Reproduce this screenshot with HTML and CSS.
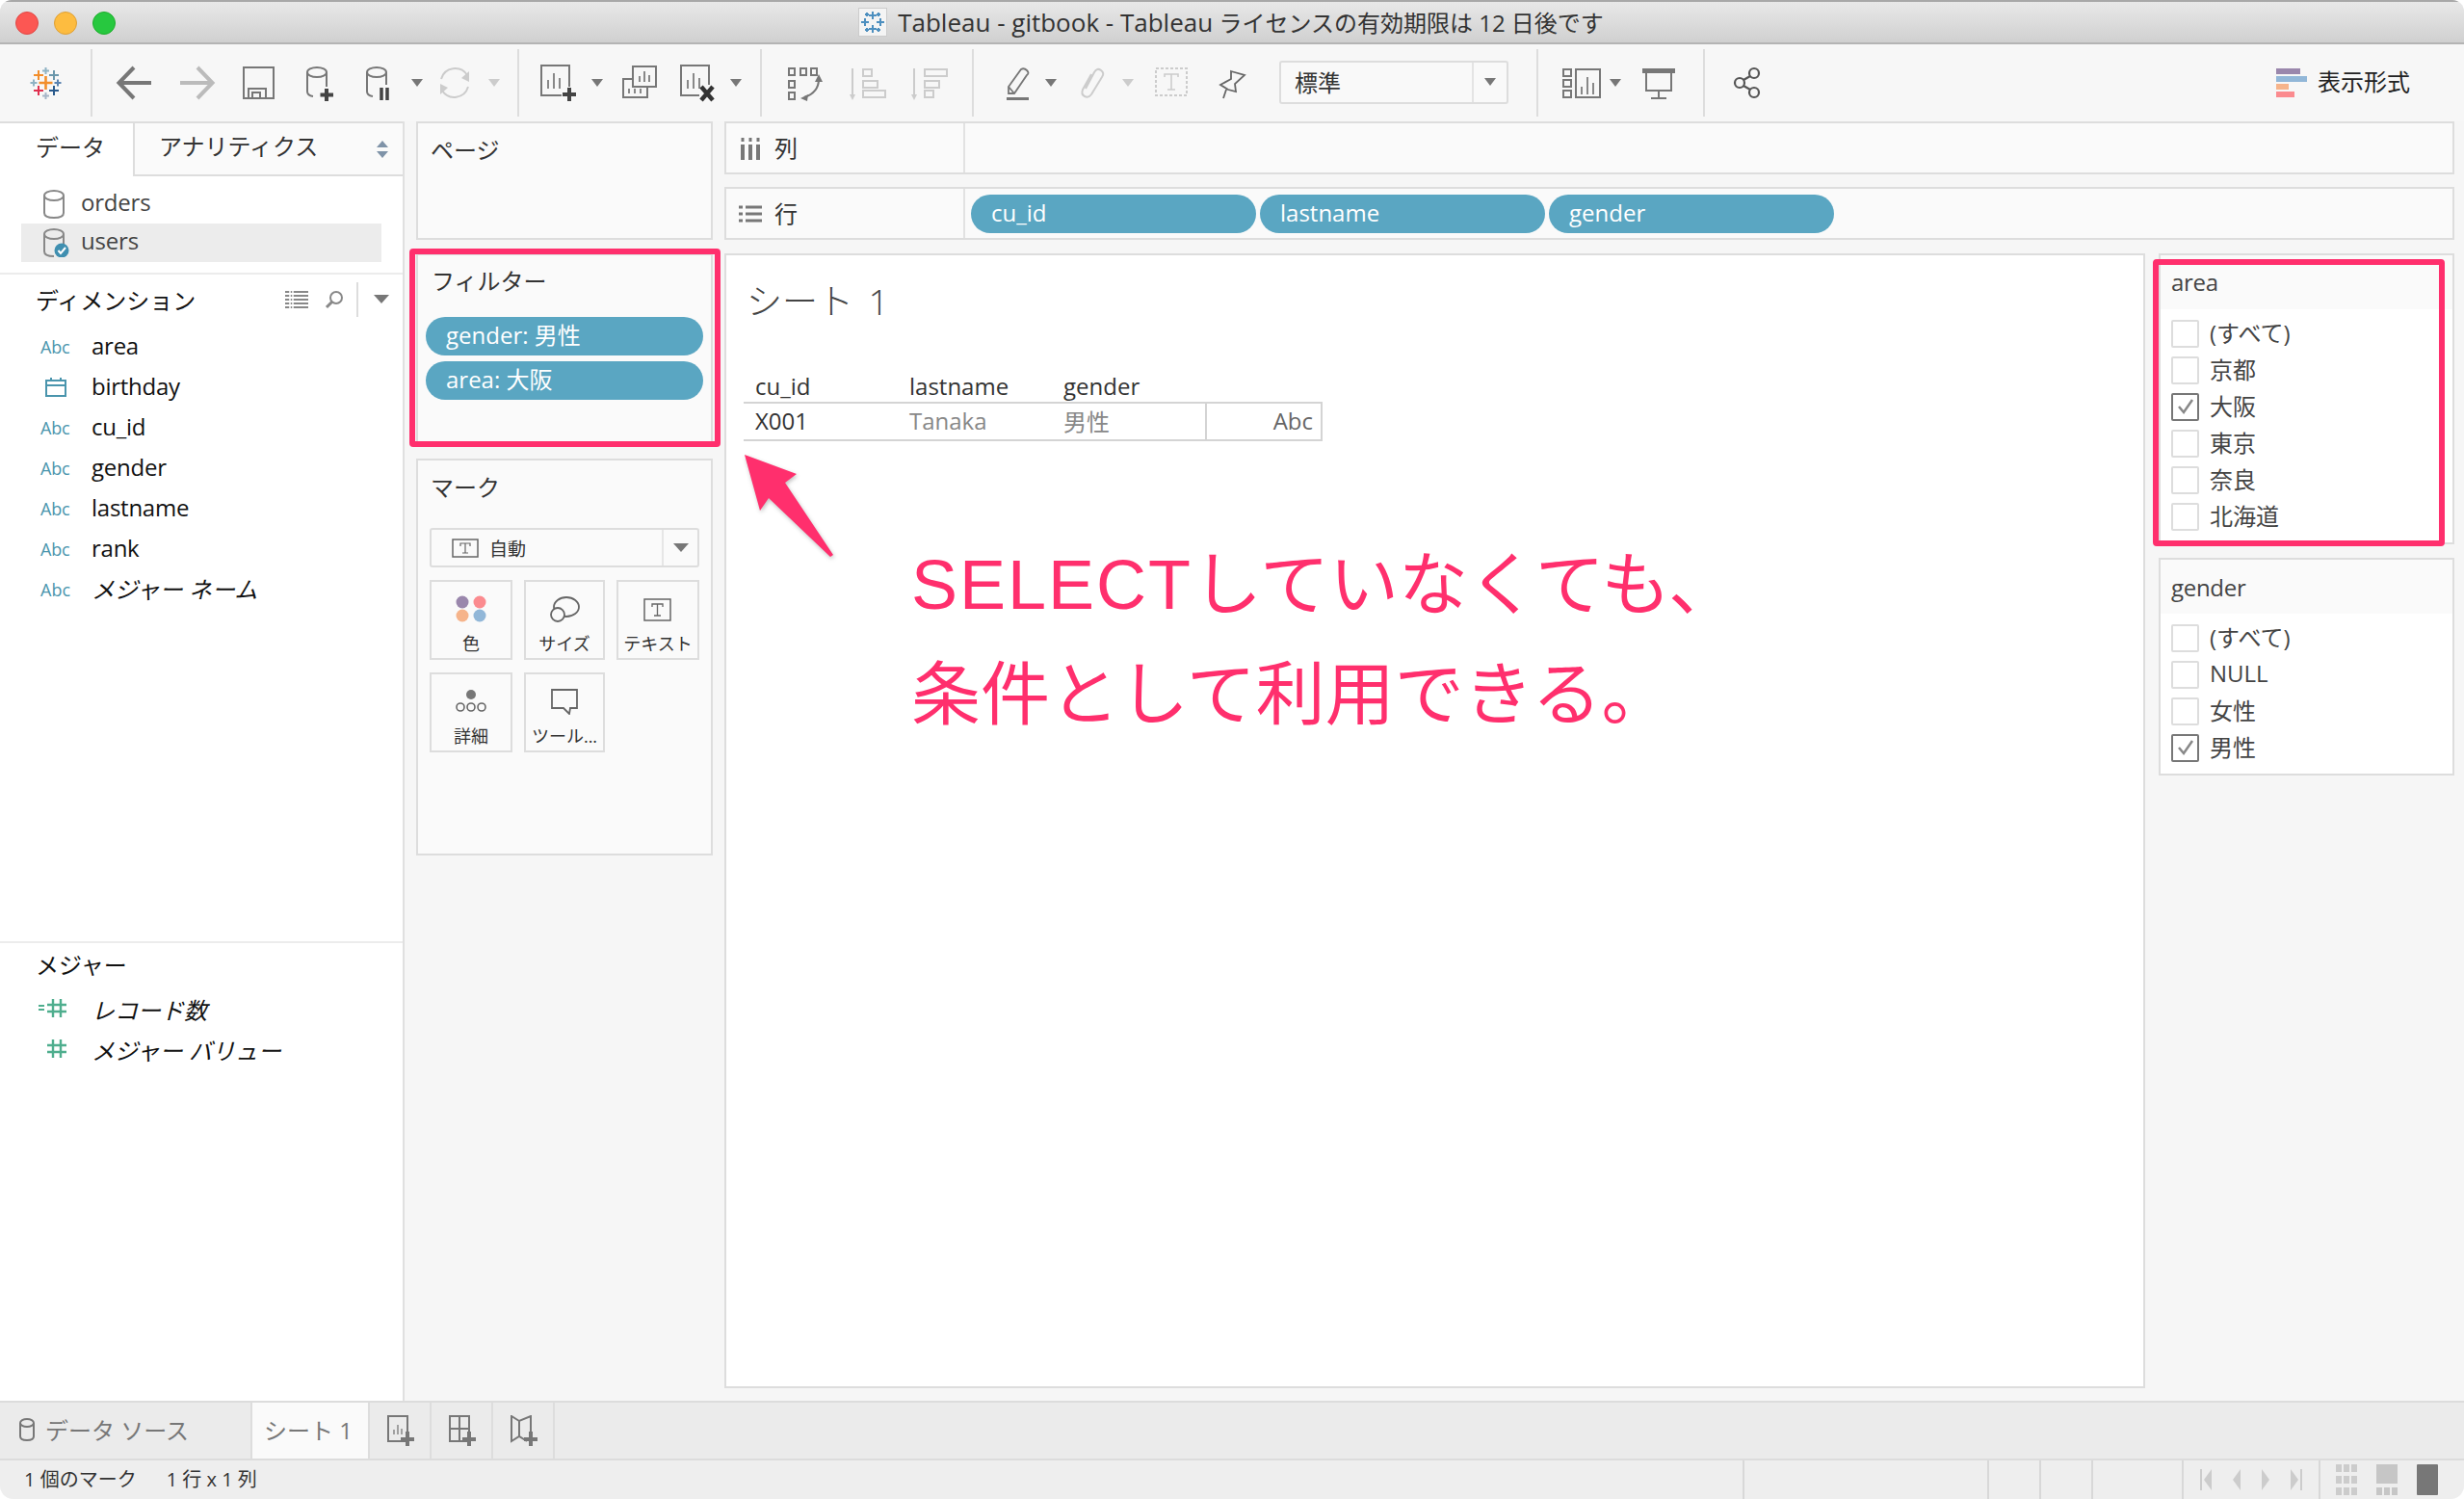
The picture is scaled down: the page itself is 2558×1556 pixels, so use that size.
FILE: index.html
```html
<!DOCTYPE html>
<html lang="ja">
<head>
<meta charset="utf-8">
<title>Tableau - gitbook</title>
<link rel="stylesheet" href="styles.css">
</head>
<body>
<div class="window">
  <header class="titlebar">
    <div class="lights"><span class="light red"></span><span class="light yellow"></span><span class="light green"></span></div>
    <div class="title">
      <svg class="doc" width="30" height="30" viewBox="0 0 30 30"><rect x="0.5" y="0.5" width="29" height="29" fill="#f4f4f4" stroke="#ccc"/><g stroke="#4d8fbf" stroke-width="2" fill="none"><path d="M15 4v8M11 8h8M15 18v8M11 22h8M7 11v8M3 15h8M23 11v8M19 15h8M9 5v4M7 7h4M21 5v4M19 7h4M9 21v4M7 23h4M21 21v4M19 23h4"/></g></svg>
      <span><span class="title-en">Tableau - gitbook - Tableau</span> ライセンスの有効期限は 12 日後です</span>
    </div>
  </header>

  <nav class="toolbar">
    <svg class="ti ml28" viewBox="0 0 40 40"><g fill="none" stroke-width="2"><path d="M19.5 13v14M12.500 20h14" stroke="#f28e2b" stroke-width="2.600"/><path d="M12 7v10M7 12h10" stroke="#f28e2b"/><path d="M28 7v10M23 12h10" stroke="#6b97ab"/><path d="M12 23v10M7 28h10" stroke="#e0304f"/><path d="M28 23v10M23 28h10" stroke="#2a5a8c"/><path d="M19.500 4v7M16 7.500h7" stroke="#8fb3c4"/><path d="M19.500 30v7M16 33.500h7" stroke="#a5b5c8"/><path d="M7 16.500v7M3.500 20h7" stroke="#8fb3c4"/><path d="M32 16.500v7M28.500 20h7" stroke="#5b83b0"/></g></svg>
    <i class="sep ml26"></i>
    <svg class="ti ml24" viewBox="0 0 40 40"><path d="M19 4 3.5 20 19 36M3.5 20H37" fill="none" stroke="#777" stroke-width="4"/></svg>
    <svg class="ti ml24" viewBox="0 0 40 40"><path d="M21 4 36.5 20 21 36M36.5 20H3" fill="none" stroke="#bbb" stroke-width="4"/></svg>
    <svg class="ti ml24" viewBox="0 0 40 40"><g fill="none" stroke="#777" stroke-width="2"><rect x="5" y="4" width="31" height="32"/><path d="M10 36V26H28V36M14 36V30H22V36"/></g></svg>
    <svg class="ti ml24" viewBox="0 0 40 40"><g fill="none" stroke="#777" stroke-width="2"><ellipse cx="17" cy="9" rx="10" ry="5"/><path d="M7 9V29Q7 33 13 34M27 9V24"/></g><path d="M27 26V39M20.500 32.500H34" stroke="#444" stroke-width="4"/></svg>
    <svg class="ti ml23" viewBox="0 0 40 40"><g fill="none" stroke="#777" stroke-width="2"><ellipse cx="16" cy="9" rx="10" ry="5"/><path d="M6 9V29Q6 33 12 34M26 9V22"/></g><path d="M21 25V38M27 25V38" stroke="#444" stroke-width="3.500"/></svg>
    <i class="caret ml12"></i>
    <svg class="ti ml13" viewBox="0 0 40 40"><g fill="none" stroke="#ccc" stroke-width="2"><path d="M6 16A15 15 0 0 1 33 12M34 24A15 15 0 0 1 7 28"/></g><path d="M35 8V19L27 15ZM5 32V21L13 25Z" fill="#ccc"/></svg>
    <i class="caret light-caret ml15"></i>
    <i class="sep ml18"></i>
    <svg class="ti ml21" viewBox="0 0 40 40"><g fill="none" stroke="#777" stroke-width="2"><path d="M23 33H2V2H31V24"/><path d="M9 26V17M15 26V10M21 26V15" stroke="#888"/></g><path d="M31 25V39M24 32H38" stroke="#444" stroke-width="4"/></svg>
    <i class="caret ml14"></i>
    <svg class="ti ml18" viewBox="0 0 40 40"><g fill="none" stroke="#777" stroke-width="2"><path d="M13 3H37V24H13ZM13 16H3V35H28V24"/><path d="M20 19V13M25 19V8M30 19V12M9 31V26M15 31V26M21 31V26" stroke="#888"/></g></svg>
    <svg class="ti ml20" viewBox="0 0 40 40"><g fill="none" stroke="#777" stroke-width="2"><path d="M22 33H3V2H32V22"/><path d="M10 26V17M16 26V10M22 26V15" stroke="#888"/></g><path d="M24 24 36 38M36 24 24 38" stroke="#333" stroke-width="4.500"/></svg>
    <i class="caret ml14"></i>
    <i class="sep ml19"></i>
    <svg class="ti ml25" viewBox="0 0 40 40"><g fill="none" stroke="#777" stroke-width="2"><rect x="3" y="5" width="6" height="7"/><rect x="15" y="5" width="6" height="7"/><rect x="26" y="5" width="6" height="7"/><rect x="3" y="18" width="6" height="7"/><rect x="3" y="30" width="6" height="7"/><path d="M34 16Q34 30 19 35"/></g><path d="M34 11 38 19H30ZM15 36 23 32 22 39Z" fill="#777"/></svg>
    <svg class="ti ml24" viewBox="0 0 40 40"><g fill="none" stroke="#ccc" stroke-width="2"><path d="M5 5V33"/><rect x="16" y="6" width="9" height="7"/><rect x="16" y="18" width="15" height="7"/><rect x="16" y="28" width="23" height="7"/></g><path d="M2 32H8L5 38Z" fill="#ccc"/></svg>
    <svg class="ti ml24" viewBox="0 0 40 40"><g fill="none" stroke="#ccc" stroke-width="2"><path d="M5 5V33"/><rect x="16" y="6" width="23" height="7"/><rect x="16" y="18" width="15" height="7"/><rect x="16" y="28" width="9" height="7"/></g><path d="M2 32H8L5 38Z" fill="#ccc"/></svg>
    <i class="sep ml25"></i>
    <svg class="ti ml25" viewBox="0 0 40 40"><g fill="none" stroke="#777" stroke-width="1.800"><path d="M11 24 24 6Q27 4 30 7T30 12L17 31H11Z"/><path d="M11 24 17 31"/></g><path d="M9 35H32V38H9Z" fill="#777"/></svg>
    <i class="caret ml9"></i>
    <svg class="ti ml15" viewBox="0 0 40 40"><path d="M15 26 24 9Q27 4 31 7T32 14L21 32Q18 36 14 34T12 27L21 11" fill="none" stroke="#ccc" stroke-width="2"/></svg>
    <i class="caret light-caret ml13"></i>
    <svg class="ti ml19" viewBox="0 0 40 40"><rect x="4" y="5" width="32" height="28" fill="none" stroke="#ccc" stroke-width="2" stroke-dasharray="3 2"/><path d="M13 14V11H27V14M20 11V27M16 27H24" fill="none" stroke="#ccc" stroke-width="1.600"/></svg>
    <svg class="ti ml23" viewBox="0 0 40 40"><path d="M19 8 33 12 23 21 24 29 16 27 8 22 19 16ZM14 27 11 36" fill="none" stroke="#666" stroke-width="1.800"/></svg>
    <div class="tb-select ml29"><span class="tb-select-label">標準</span><span class="tb-select-btn"><i class="caret"></i></span></div>
    <i class="sep ml29"></i>
    <svg class="ti ml25" viewBox="0 0 40 40"><g fill="none" stroke="#777" stroke-width="2"><rect x="1" y="6" width="8" height="7"/><rect x="1" y="17" width="8" height="7"/><rect x="1" y="28" width="8" height="7"/><rect x="14" y="6" width="25" height="29"/><path d="M20 32V24M26 32V14M32 32V20" stroke="#888"/></g></svg>
    <i class="caret ml9"></i>
    <svg class="ti ml19" viewBox="0 0 40 40"><g fill="none" stroke="#777" stroke-width="2"><path d="M7 9V28H33V9M20 28V36M12 36H28"/></g><path d="M3 5H37V10H3Z" fill="#777"/></svg>
    <i class="sep ml26"></i>
    <svg class="ti ml24" viewBox="0 0 40 40"><g fill="none" stroke="#555" stroke-width="2.200"><circle cx="27" cy="10" r="5"/><circle cx="12" cy="20" r="5"/><circle cx="27" cy="30" r="5"/><path d="M16 17 23 13M16 23 23 27"/></g></svg>
    <div class="showme"><span class="showme-bars"><i class="b1"></i><i class="b2"></i><i class="b3"></i><i class="b4"></i></span><span class="showme-label">表示形式</span></div>
  </nav>

  <main class="main">
    <aside class="data-pane">
      <div class="pane-tabs">
        <div class="pane-tab active">データ</div>
        <div class="pane-tab">アナリティクス<span class="updown"></span></div>
      </div>
      <ul class="sources">
        <li class="source"><svg class="cyl" width="22" height="30" viewBox="0 0 22 30"><g fill="none" stroke="#888" stroke-width="2"><ellipse cx="11" cy="6" rx="10" ry="5"/><path d="M1 6V24Q1 29 11 29T21 24V6"/></g></svg>orders</li>
        <li class="source selected"><svg class="cyl" width="28" height="30" viewBox="0 0 28 30"><g fill="none" stroke="#888" stroke-width="2"><ellipse cx="11" cy="6" rx="10" ry="5"/><path d="M1 6V24Q1 29 11 29M21 6V16"/></g><circle cx="19" cy="23" r="7.500" fill="#3f8fb0"/><path d="M15.500 23 18 26 23 20" fill="none" stroke="#fff" stroke-width="2"/></svg>users</li>
      </ul>
      <section class="dims">
        <div class="sec-head">ディメンション
          <span class="sec-tools">
            <svg width="24" height="18" viewBox="0 0 24 18"><path d="M0 1H24M0 5H24M0 9H24M0 13H24M0 17H24" stroke="#888" stroke-width="2"/><path d="M5 0V18M8 0V18" stroke="#fff" stroke-width="1.500"/></svg>
            <svg class="mag" width="20" height="20" viewBox="0 0 20 20"><circle cx="12" cy="8" r="6" fill="none" stroke="#888" stroke-width="2"/><path d="M8 12 2 18" stroke="#888" stroke-width="3"/></svg>
            <i class="tool-sep"></i>
            <i class="caret big"></i>
          </span>
        </div>
        <ul class="fields">
          <li class="field"><span class="abc">Abc</span>area</li>
          <li class="field"><span class="abc"><svg width="22" height="20" viewBox="0 0 22 20"><g fill="none" stroke="#4a95ad" stroke-width="2"><rect x="1" y="3" width="20" height="16"/><path d="M1 8H21M6 0V3M16 0V3"/></g></svg></span>birthday</li>
          <li class="field"><span class="abc">Abc</span>cu_id</li>
          <li class="field"><span class="abc">Abc</span>gender</li>
          <li class="field"><span class="abc">Abc</span>lastname</li>
          <li class="field"><span class="abc">Abc</span>rank</li>
          <li class="field italic"><span class="abc upright">Abc</span>メジャー ネーム</li>
        </ul>
      </section>
      <section class="measures">
        <div class="sec-head">メジャー</div>
        <ul class="fields">
          <li class="field italic"><span class="abc"><svg width="30" height="20" viewBox="0 0 30 20"><path d="M0 7H6M0 11H6" stroke="#4fae8e" stroke-width="2"/><path d="M9 6H29M9 13H29M15 0V19M23 0V19" stroke="#4fae8e" stroke-width="2.400" fill="none"/></svg></span>レコード数</li>
          <li class="field italic"><span class="abc"><svg width="30" height="20" viewBox="0 0 30 20"><path d="M9 6H29M9 13H29M15 0V19M23 0V19" stroke="#4fae8e" stroke-width="2.400" fill="none"/></svg></span>メジャー バリュー</li>
        </ul>
      </section>
    </aside>

    <div class="cards">
      <section class="card pages"><h3 class="card-title">ページ</h3></section>
      <section class="card filters">
        <h3 class="card-title">フィルター</h3>
        <div class="filter-pill">gender: 男性</div>
        <div class="filter-pill">area: 大阪</div>
      </section>
      <section class="card marks">
        <h3 class="card-title">マーク</h3>
        <div class="mark-select">
          <svg width="28" height="20" viewBox="0 0 28 20"><rect x="1" y="1" width="26" height="18" fill="none" stroke="#666" stroke-width="1.500"/><path d="M9 8V5H19V8M14 5V15M11 15H17" fill="none" stroke="#666" stroke-width="1.200"/></svg>
          <span>自動</span>
          <span class="mark-select-btn"><i class="caret big"></i></span>
        </div>
        <div class="mark-grid">
          <div class="mark-btn"><svg width="32" height="28" viewBox="0 0 32 28"><circle cx="7" cy="7" r="6.500" fill="#9a87ac"/><circle cx="25" cy="7" r="6.500" fill="#fb8b8f"/><circle cx="7" cy="21" r="6.500" fill="#f6b48b"/><circle cx="25" cy="21" r="6.500" fill="#92b7d8"/></svg><span>色</span></div>
          <div class="mark-btn"><svg width="32" height="28" viewBox="0 0 32 28"><g fill="none" stroke="#666" stroke-width="1.800"><ellipse cx="18" cy="12" rx="13" ry="10"/><circle cx="9" cy="20" r="7" fill="#fafafa"/></g></svg><span>サイズ</span></div>
          <div class="mark-btn"><svg width="30" height="26" viewBox="0 0 30 26"><rect x="1" y="2" width="27" height="22" fill="none" stroke="#666" stroke-width="1.500"/><path d="M9 10V7H20V10M14.500 7V19M11 19H18" fill="none" stroke="#666" stroke-width="1.300"/></svg><span>テキスト</span></div>
          <div class="mark-btn"><svg width="32" height="28" viewBox="0 0 32 28"><circle cx="16" cy="7" r="5" fill="#777"/><g fill="none" stroke="#666" stroke-width="1.600"><circle cx="5" cy="20" r="4"/><circle cx="16" cy="20" r="4"/><circle cx="27" cy="20" r="4"/></g></svg><span>詳細</span></div>
          <div class="mark-btn"><svg width="30" height="28" viewBox="0 0 30 28"><path d="M2 2H28V21H21L20 27 14 21H2Z" fill="none" stroke="#666" stroke-width="1.800"/></svg><span>ツール...</span></div>
        </div>
      </section>
    </div>

    <div class="workspace">
      <div class="shelf"><div class="shelf-label"><svg width="24" height="24" viewBox="0 0 24 24"><path d="M4 8V24M12 8V24M20 8V24" stroke="#777" stroke-width="4"/><path d="M4 1V5M12 1V5M20 1V5" stroke="#777" stroke-width="3"/></svg><span class="shelf-name">列</span></div><div class="shelf-body"></div></div>
      <div class="shelf"><div class="shelf-label"><svg width="24" height="20" viewBox="0 0 24 20"><path d="M0 3H4M0 10H4M0 17H4M7 3H24M7 10H24M7 17H24" stroke="#777" stroke-width="3"/></svg><span class="shelf-name">行</span></div>
        <div class="shelf-body"><div class="pill">cu_id</div><div class="pill">lastname</div><div class="pill">gender</div></div>
      </div>
      <div class="work-row">
        <section class="viz">
          <h1 class="viz-title">シート 1</h1>
          <table class="crosstab">
            <thead><tr><th>cu_id</th><th>lastname</th><th>gender</th><th></th></tr></thead>
            <tbody><tr><td class="key">X001</td><td>Tanaka</td><td>男性</td><td class="abc-cell">Abc</td></tr></tbody>
          </table>
        </section>
        <aside class="legends">
          <section class="legend area-legend">
            <h4 class="legend-title">area</h4>
            <ul class="checks">
              <li><i class="box"></i>(すべて)</li>
              <li><i class="box"></i>京都</li>
              <li><i class="box on"><svg width="22" height="22" viewBox="0 0 22 22"><path d="M4 11 9 17 18 4" fill="none" stroke="#888" stroke-width="2.500"/></svg></i>大阪</li>
              <li><i class="box"></i>東京</li>
              <li><i class="box"></i>奈良</li>
              <li><i class="box"></i>北海道</li>
            </ul>
          </section>
          <section class="legend">
            <h4 class="legend-title">gender</h4>
            <ul class="checks">
              <li><i class="box"></i>(すべて)</li>
              <li><i class="box"></i>NULL</li>
              <li><i class="box"></i>女性</li>
              <li><i class="box on"><svg width="22" height="22" viewBox="0 0 22 22"><path d="M4 11 9 17 18 4" fill="none" stroke="#888" stroke-width="2.500"/></svg></i>男性</li>
            </ul>
          </section>
        </aside>
      </div>
    </div>
  </main>

  <div class="tabbar">
    <div class="tab source-tab"><svg width="16" height="24" viewBox="0 0 16 24"><g fill="none" stroke="#777" stroke-width="2"><ellipse cx="8" cy="5" rx="7" ry="4"/><path d="M1 5V19Q1 23 8 23T15 19V5"/></g></svg>データ ソース</div>
    <div class="tab sheet-tab">シート 1</div>
    <div class="tab add-tab"><svg width="32" height="32" viewBox="0 0 32 32"><path d="M20 27H2V1H22V18" fill="none" stroke="#777" stroke-width="2"/><path d="M8 20V15M12 20V10M16 20V14" stroke="#888" stroke-width="1.500"/><path d="M22 17V32M15 25H29" stroke="#777" stroke-width="4"/></svg></div>
    <div class="tab add-tab"><svg width="32" height="32" viewBox="0 0 32 32"><path d="M20 27H2V1H22V18M2 14H22M12 1V27" fill="none" stroke="#777" stroke-width="2"/><path d="M22 17V32M15 25H29" stroke="#777" stroke-width="4"/></svg></div>
    <div class="tab add-tab"><svg width="32" height="32" viewBox="0 0 32 32"><path d="M18 27 10 22 2 27V1L10 6 22 1V18M10 6V22" fill="none" stroke="#777" stroke-width="2"/><path d="M22 17V32M15 25H29" stroke="#777" stroke-width="4"/></svg></div>
  </div>

  <footer class="statusbar">
    <span class="status-a">1 個のマーク</span><span class="status-b">1 行 x 1 列</span>
    <div class="status-cells">
      <i class="scell w254"></i><i class="scell w54"></i><i class="scell w54"></i><i class="scell w94"></i>
      <div class="scell pager">
        <svg width="12" height="22" viewBox="0 0 12 22"><path d="M1 0V22" stroke="#ccc" stroke-width="2"/><path d="M12 0V22L4 11Z" fill="#ccc"/></svg>
        <svg width="8" height="22" viewBox="0 0 8 22"><path d="M8 0V22L0 11Z" fill="#ccc"/></svg>
        <svg width="8" height="22" viewBox="0 0 8 22"><path d="M0 0V22L8 11Z" fill="#ccc"/></svg>
        <svg width="12" height="22" viewBox="0 0 12 22"><path d="M11 0V22" stroke="#ccc" stroke-width="2"/><path d="M0 0V22L8 11Z" fill="#ccc"/></svg>
      </div>
      <div class="views">
        <svg width="22" height="32" viewBox="0 0 22 32"><path d="M0 0H6V8H0ZM8 0H14V8H8ZM16 0H22V8H16ZM0 12H6V20H0ZM8 12H14V20H8ZM16 12H22V20H16ZM0 24H6V32H0ZM8 24H14V32H8ZM16 24H22V32H16Z" fill="#ccc"/></svg>
        <svg width="22" height="32" viewBox="0 0 22 32"><path d="M0 0H22V20H0ZM0 24H6V32H0ZM8 24H14V32H8ZM16 24H22V32H16Z" fill="#c6c6c6"/></svg>
        <svg width="22" height="32" viewBox="0 0 22 32"><rect width="22" height="32" rx="1" fill="#777"/></svg>
      </div>
    </div>
  </footer>

  <div class="hl hl-filter"></div>
  <div class="hl hl-area"></div>
  <svg class="arrow" width="100" height="110" viewBox="0 0 100 110"><path d="M2 2 56 22 44 31 94 106 91 108 27 47 18 60Z" fill="#ff2f6d"/></svg>
  <p class="note"><span class="note-en">SELECT</span>していなくても、<br>条件として利用できる。</p>
</div>
</body>
</html>
```

FILE: styles.css
```css
* { box-sizing: border-box; }
html, body { margin: 0; padding: 0; background: #fff; }
body { width: 2558px; height: 1556px; overflow: hidden; font-family: "Open Sans", "Noto Sans CJK JP", sans-serif; color: #333; font-size: 24px; }
ul { list-style: none; margin: 0; padding: 0; }
h1, h3, h4, p { margin: 0; font-weight: 400; }
i { font-style: normal; display: block; }

.window { position: relative; width: 2558px; height: 1556px; display: flex; flex-direction: column; overflow: hidden; border-radius: 12px 12px 14px 14px; background: #f6f6f6; }

.titlebar { position: relative; height: 46px; flex: none; background: linear-gradient(#e8e8e8, #d0d0d0); border-top: 2px solid #a8a8a8; border-bottom: 2px solid #b4b4b4; display: flex; align-items: center; justify-content: center; }
.lights { position: absolute; left: 16px; top: 10px; display: flex; gap: 16px; }
.light { width: 24px; height: 24px; border-radius: 50%; }
.red { background: #fc5753; border: 1px solid #df4744; }
.yellow { background: #fdbc40; border: 1px solid #de9f34; }
.green { background: #27c83f; border: 1px solid #1dad2b; }
.title { display: flex; align-items: center; gap: 11px; font-size: 24px; color: #333; margin-left: -2px; }
.title-en { font-size: 26px; }

.toolbar { height: 80px; flex: none; display: flex; align-items: center; background: #f7f7f7; }
.ti { width: 40px; height: 40px; flex: none; }
.sep { width: 2px; height: 70px; background: #ddd; flex: none; }
.caret { width: 0; height: 0; border-left: 6px solid transparent; border-right: 6px solid transparent; border-top: 8px solid #777; flex: none; }
.caret.big { border-left-width: 8px; border-right-width: 8px; border-top-width: 9px; }
.light-caret { border-top-color: #ccc; }
.ml9 { margin-left: 9px; } .ml12 { margin-left: 12px; } .ml13 { margin-left: 13px; } .ml14 { margin-left: 14px; } .ml15 { margin-left: 15px; } .ml18 { margin-left: 18px; } .ml19 { margin-left: 19px; } .ml20 { margin-left: 20px; } .ml21 { margin-left: 21px; } .ml23 { margin-left: 23px; } .ml24 { margin-left: 24px; } .ml25 { margin-left: 25px; } .ml26 { margin-left: 26px; } .ml28 { margin-left: 28px; } .ml29 { margin-left: 29px; }
.tb-select { width: 238px; height: 45px; flex: none; border: 2px solid #ddd; border-radius: 3px; display: flex; align-items: center; background: #f9f9f9; font-size: 24px; margin-top: -2px; }
.tb-select-label { flex: 1; padding-left: 14px; padding-bottom: 2px; }
.tb-select-btn { width: 36px; height: 100%; border-left: 2px solid #e4e4e4; display: flex; align-items: center; justify-content: center; }
.showme { margin-left: auto; padding-right: 56px; display: flex; align-items: center; gap: 11px; color: #222; }
.showme-label { padding-bottom: 5px; }
.showme-bars { display: flex; flex-direction: column; gap: 2px; width: 32px; }
.showme-bars i { height: 6px; }
.b1 { width: 25px; background: #9a87ac; } .b2 { width: 32px; background: #92b7d8; } .b3 { width: 13px; background: #f6b48b; } .b4 { width: 19px; background: #fb8b8f; }

.main { flex: 1; min-height: 0; display: flex; }

.data-pane { width: 420px; flex: none; background: #fff; border-right: 2px solid #e0e0e0; display: flex; flex-direction: column; color: #111; }
.pane-tabs { display: flex; height: 57px; flex: none; border-top: 2px solid #ddd; }
.pane-tab { display: flex; align-items: center; padding-bottom: 8px; color: #333; }
.pane-tab.active { width: 138px; padding-left: 37px; background: #fff; }
.pane-tab:not(.active) { flex: 1; padding-left: 25px; background: #fafafa; border-left: 2px solid #ddd; border-bottom: 2px solid #ddd; position: relative; }
.updown { position: absolute; right: 15px; top: 18px; width: 12px; height: 18px; }
.updown::before, .updown::after { content: ""; position: absolute; left: 0; border-left: 6px solid transparent; border-right: 6px solid transparent; }
.updown::before { top: 0; border-bottom: 7px solid #7f93a8; }
.updown::after { bottom: 0; border-top: 7px solid #7f93a8; }

.sources { height: 102px; flex: none; padding: 9px 22px 0; border-bottom: 2px solid #ececec; color: #444; letter-spacing: -0.2px; }
.source { height: 40px; display: flex; align-items: center; padding-left: 23px; padding-bottom: 5px; gap: 17px; }
.source .cyl { flex: none; margin-top: 5px; }
.source.selected { background: #ececec; gap: 11px; }

.dims { height: 694px; flex: none; border-bottom: 2px solid #ececec; }
.sec-head { height: 54px; display: flex; align-items: center; padding-left: 37px; color: #111; }
.dims .sec-head { padding-bottom: 3px; }
.sec-tools { margin-left: auto; display: flex; align-items: center; padding-right: 14px; }
.mag { margin-left: 17px; }
.tool-sep { width: 2px; height: 36px; background: #ddd; margin-left: 13px; margin-right: 16px; }
.field { height: 42px; display: flex; align-items: center; }
.dims .field { padding-bottom: 4px; letter-spacing: -0.25px; }
.dims .abc { margin-top: 4px; }
.field.italic { font-style: italic; letter-spacing: 0; }
.abc { width: 95px; padding-left: 42px; flex: none; font-size: 18px; color: #4a95ad; font-style: normal; display: flex; align-items: center; }
.field svg { margin-left: 5px; flex: none; }
.measures .field svg { margin-left: -2px; }
.measures .sec-head { height: 42px; margin-bottom: 5px; }

.cards { width: 308px; flex: none; margin-left: 12px; display: flex; flex-direction: column; }
.card { background: #fafafa; border: 2px solid #ddd; padding: 10px 0 0 13px; }
.card-title { font-size: 24px; line-height: 36px; }
.pages { height: 123px; }
.filters { height: 199px; margin-top: 14px; padding: 11px 8px 0; }
.filters .card-title { padding-left: 6px; margin-bottom: 19px; margin-top: -2px; }
.filter-pill { height: 40px; width: 288px; margin-bottom: 6px; border-radius: 20px; background: #5aa6c2; color: #fff; padding-left: 21px; line-height: 37px; }
.marks { height: 412px; margin-top: 14px; padding: 11px 0 0 12px; }
.marks .card-title { padding-left: 1px; margin-bottom: 24px; margin-top: -1px; }
.mark-select { width: 280px; height: 41px; border: 2px solid #ddd; border-radius: 3px; display: flex; align-items: center; padding-left: 21px; gap: 11px; font-size: 19px; }
.mark-select-btn { margin-left: auto; width: 37px; height: 100%; border-left: 2px solid #e6e6e6; display: flex; align-items: center; justify-content: center; }
.mark-grid { display: grid; grid-template-columns: 86px 84px 86px; column-gap: 12px; row-gap: 13px; margin-top: 13px; }
.mark-btn { height: 83px; border: 2px solid #ddd; display: flex; flex-direction: column; align-items: center; justify-content: flex-end; font-size: 18px; padding-bottom: 3px; gap: 8px; white-space: nowrap; }

.workspace { flex: 1; min-width: 0; margin-left: 12px; margin-right: 10px; display: flex; flex-direction: column; }
.shelf { height: 55px; flex: none; margin-bottom: 13px; border: 2px solid #ddd; background: #fafafa; display: flex; }
.shelf-label { width: 248px; flex: none; border-right: 2px solid #e2e2e2; display: flex; align-items: center; padding-left: 13px; gap: 13px; }
.shelf-name { padding-bottom: 3px; }
.shelf-body { flex: 1; display: flex; align-items: center; padding-left: 6px; gap: 4px; }
.pill { width: 296px; height: 40px; border-radius: 20px; background: #5aa6c2; color: #fff; padding-left: 21px; line-height: 38px; }
.work-row { display: flex; margin-top: 1px; gap: 14px; }
.viz { width: 1475px; height: 1178px; flex: none; background: #fff; border: 2px solid #ddd; padding: 23px 0 0 18px; }
.viz-title { font-size: 37px; line-height: 50px; color: #444; padding-left: 3px; font-weight: 300; word-spacing: 6px; }
.crosstab { border-collapse: collapse; margin-top: 38px; font-size: 24px; width: 600px; table-layout: fixed; }
.crosstab th { font-weight: 500; text-align: left; height: 40px; padding: 8px 0 0 12px; color: #333; width: 160px; }
.crosstab th:last-child { width: 120px; }
.crosstab td { height: 39px; padding: 0 0 2px 12px; border-top: 2px solid #d4d4d4; border-bottom: 2px solid #d4d4d4; color: #888; }
.crosstab td.key { color: #333; }
.crosstab td.abc-cell { text-align: right; padding-right: 8px; border-left: 2px solid #d4d4d4; border-right: 2px solid #d4d4d4; color: #666; }

.legends { width: 307px; flex: none; display: flex; flex-direction: column; gap: 14px; }
.legend { background: #fff; border: 2px solid #ddd; padding-bottom: 8px; }
.legend-title { height: 56px; background: #fafafa; padding-left: 11px; font-size: 24px; line-height: 58px; color: #444; letter-spacing: -0.3px; }
.area-legend { height: 302px; }
.area-legend .legend-title { line-height: 56px; }
.checks { padding: 6px 0 0 11px; }
.checks li { height: 38px; display: flex; align-items: center; gap: 11px; color: #444; padding-bottom: 3px; }
.box { width: 29px; height: 29px; border: 2px solid #ddd; border-radius: 2px; background: #fff; display: flex; align-items: center; justify-content: center; flex: none; margin-top: 3px; }
.box.on { border-color: #777; }

.tabbar { height: 62px; flex: none; background: #ebebeb; border-top: 2px solid #dcdcdc; border-bottom: 2px solid #dcdcdc; display: flex; color: #777; }
.tab { height: 58px; display: flex; align-items: center; border-right: 2px solid #ddd; }
.source-tab { width: 262px; padding-left: 20px; gap: 11px; padding-bottom: 3px; }
.sheet-tab { width: 122px; padding-left: 12px; padding-bottom: 3px; background: #fafafa; }
.add-tab { width: 64px; justify-content: center; padding-left: 3px; }

.statusbar { height: 40px; flex: none; background: #eee; display: flex; align-items: stretch; font-size: 20px; color: #333; line-height: 40px; position: relative; }
.status-a { margin-left: 25px; }
.status-b { margin-left: 31px; }
.status-cells { margin-left: auto; display: flex; align-items: stretch; }
.scell { border-left: 2px solid #d8d8d8; }
.w254 { width: 254px; } .w54 { width: 54px; } .w94 { width: 94px; }
.pager { width: 142px; display: flex; align-items: center; justify-content: center; gap: 22px; }
.views { width: 151px; border-left: 2px solid #d8d8d8; display: flex; align-items: center; gap: 20px; padding-left: 16px; }

.hl { position: absolute; border: 6px solid #ff2f6d; border-radius: 4px; pointer-events: none; }
.hl-filter { left: 425px; top: 258px; width: 323px; height: 206px; }
.hl-area { left: 2235px; top: 269px; width: 303px; height: 298px; }
.arrow { position: absolute; left: 771px; top: 470px; filter: drop-shadow(1px 2px 2px rgba(0,0,0,.25)); }
.note { position: absolute; left: 946px; top: 550px; font-size: 72px; line-height: 114px; color: #ff2f6d; font-family: "Liberation Sans", "Noto Sans CJK JP", sans-serif; white-space: nowrap; }
.note-en { letter-spacing: 2px; }
```
